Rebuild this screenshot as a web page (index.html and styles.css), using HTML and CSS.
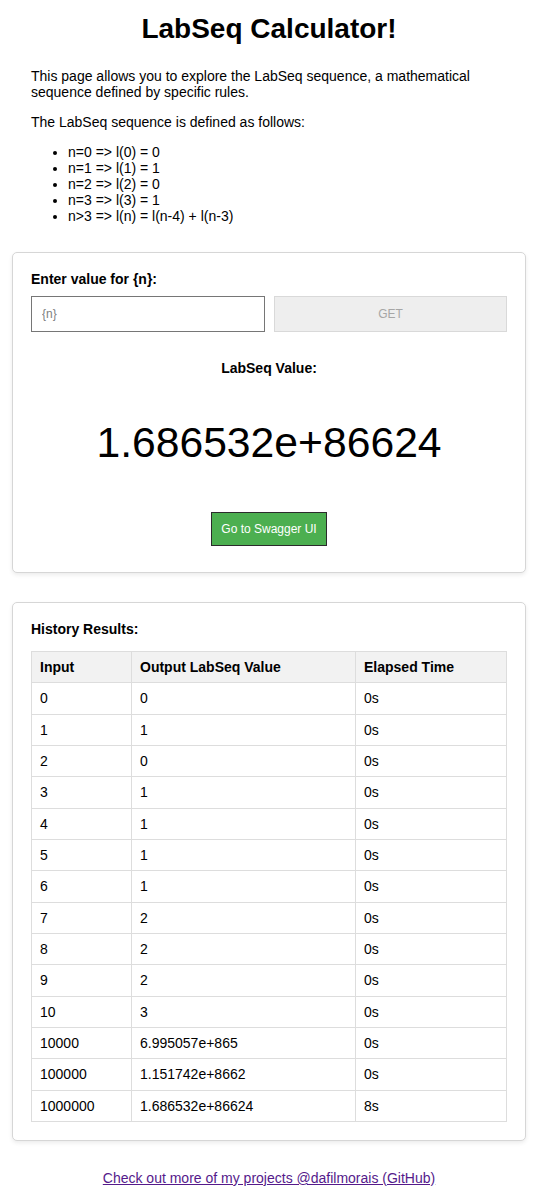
FILE: index.html
```html
<!DOCTYPE html>
<html lang="en">
<head>
<meta charset="utf-8">
<title>LabSeq Calculator!</title>
<link rel="stylesheet" href="styles.css">
</head>
<body>
<div class="page">
  <h1 class="title">LabSeq Calculator!</h1>
  <div class="intro">
    <p class="intro-text">This page allows you to explore the LabSeq sequence, a mathematical sequence defined by specific rules.</p>
    <p class="intro-text">The LabSeq sequence is defined as follows:</p>
    <ul class="rules">
      <li>n=0 =&gt; l(0) = 0</li>
      <li>n=1 =&gt; l(1) = 1</li>
      <li>n=2 =&gt; l(2) = 0</li>
      <li>n=3 =&gt; l(3) = 1</li>
      <li>n&gt;3 =&gt; l(n) = l(n-4) + l(n-3)</li>
    </ul>
  </div>

  <div class="card calc">
    <label class="card-label" for="n">Enter value for {n}:</label>
    <div class="input-row">
      <input class="n-input" id="n" type="text" placeholder="{n}">
      <button class="get-btn" disabled>GET</button>
    </div>
    <div class="result-label">LabSeq Value:</div>
    <div class="result-value">1.686532e+86624</div>
    <div class="swagger-wrap">
      <button class="swagger-btn">Go to Swagger UI</button>
    </div>
  </div>

  <div class="card history">
    <div class="card-label">History Results:</div>
    <table class="results">
      <thead>
        <tr><th class="col-in">Input</th><th class="col-out">Output LabSeq Value</th><th class="col-time">Elapsed Time</th></tr>
      </thead>
      <tbody>
        <tr><td>0</td><td>0</td><td>0s</td></tr>
        <tr><td>1</td><td>1</td><td>0s</td></tr>
        <tr><td>2</td><td>0</td><td>0s</td></tr>
        <tr><td>3</td><td>1</td><td>0s</td></tr>
        <tr><td>4</td><td>1</td><td>0s</td></tr>
        <tr><td>5</td><td>1</td><td>0s</td></tr>
        <tr><td>6</td><td>1</td><td>0s</td></tr>
        <tr><td>7</td><td>2</td><td>0s</td></tr>
        <tr><td>8</td><td>2</td><td>0s</td></tr>
        <tr><td>9</td><td>2</td><td>0s</td></tr>
        <tr><td>10</td><td>3</td><td>0s</td></tr>
        <tr><td>10000</td><td>6.995057e+865</td><td>0s</td></tr>
        <tr><td>100000</td><td>1.151742e+8662</td><td>0s</td></tr>
        <tr><td>1000000</td><td>1.686532e+86624</td><td>8s</td></tr>
      </tbody>
    </table>
  </div>

  <div class="footer">
    <a class="gh-link" href="#">Check out more of my projects @dafilmorais (GitHub)</a>
  </div>
</div>
</body>
</html>
```

FILE: styles.css
```css
html, body {
  margin: 0;
  padding: 0;
  background: #ffffff;
}

body {
  font-family: "Liberation Sans", Arial, sans-serif;
  font-size: 14px;
  line-height: 16px;
  color: #000000;
}

.page {
  padding: 0 9px 0 12px;
}

.title {
  margin: 13px 0 23px;
  font-size: 28px;
  line-height: 32px;
  font-weight: bold;
  text-align: center;
}

.intro {
  padding: 0 19px;
}

.intro-text {
  margin: 0 0 14px;
}

.rules {
  margin: 0 0 28px;
  padding-left: 37px;
}

.card {
  background: #ffffff;
  border: 1px solid #d6d6d6;
  border-radius: 5px;
  box-shadow: 0 2px 4px rgba(0, 0, 0, 0.08);
  padding: 18px;
}

.calc {
  margin-bottom: 29px;
}

.card-label {
  display: block;
  font-weight: bold;
  line-height: 16px;
}

.calc .card-label {
  margin-bottom: 9px;
}

.input-row {
  display: flex;
  gap: 9px;
}

.n-input {
  flex: 0 0 234px;
  width: 234px;
  box-sizing: border-box;
  height: 36px;
  margin: 0;
  padding: 0 10px;
  border: 1px solid #767676;
  border-radius: 0;
  font-family: "Liberation Sans", Arial, sans-serif;
  font-size: 12px;
  color: #000;
  outline: none;
}

.n-input::placeholder {
  color: #808080;
}

.get-btn {
  flex: 1 1 0;
  min-width: 0;
  box-sizing: border-box;
  height: 36px;
  margin: 0;
  padding: 0;
  background: #eeeeee;
  border: 1px solid #d9d9d9;
  border-radius: 0;
  color: #a6a6a6;
  font-family: "Liberation Sans", Arial, sans-serif;
  font-size: 12px;
}

.result-label {
  margin-top: 28px;
  text-align: center;
  font-weight: bold;
  line-height: 16px;
}

.result-value {
  margin-top: 42px;
  text-align: center;
  font-size: 42.67px;
  line-height: 49px;
}

.swagger-wrap {
  margin-top: 45px;
  margin-bottom: 8px;
  display: flex;
  justify-content: center;
}

.swagger-btn {
  box-sizing: border-box;
  height: 34px;
  padding: 0 9px;
  margin: 0;
  background: #4caf50;
  border: 1px solid #2b2b2b;
  border-radius: 0;
  color: #ffffff;
  font-family: "Liberation Sans", Arial, sans-serif;
  font-size: 12px;
}

.history .card-label {
  margin-bottom: 14px;
}

.results {
  width: 100%;
  border-collapse: collapse;
  table-layout: fixed;
}

.results th,
.results td {
  border: 1px solid #dddddd;
  padding: 7px 8px;
  line-height: 16.33px;
  text-align: left;
}

.results th {
  background: #f2f2f2;
  font-weight: bold;
}

.col-in {
  width: 83px;
}

.col-out {
  width: 207px;
}

.footer {
  margin-top: 29px;
  padding-bottom: 20px;
  text-align: center;
}

.gh-link {
  color: #551a8b;
  text-decoration: underline;
}
```
